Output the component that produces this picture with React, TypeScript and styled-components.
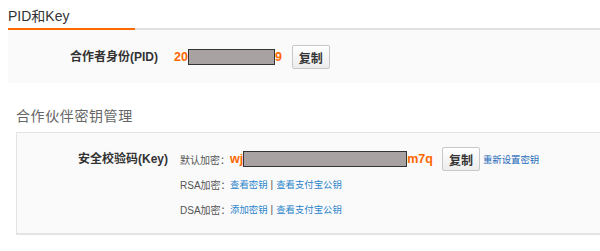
import React from "react";
import styled, { createGlobalStyle } from "styled-components";

const GlobalStyle = createGlobalStyle`
  body {
    margin: 0;
    background: #fff;
    overflow: hidden;
    font-family: "Liberation Sans", "Noto Sans CJK SC", sans-serif;
    color: #333;
  }
`;

const Page = styled.div`
  width: 592px;
  padding-left: 8px;
`;

const TabBar = styled.div`
  display: flex;
  height: 28px;
  border-bottom: 2px solid #e0e0e0;
`;

const Tab = styled.div`
  width: 127px;
  padding-top: 5px;
  font-size: 14px;
  color: #333;
  border-bottom: 2px solid #ff6a00;
  margin-bottom: -2px;
`;

const Panel = styled.div<{ $bordered?: boolean }>`
  background: #fafafa;
  margin-left: ${(p) => (p.$bordered ? "8px" : "0")};
  border: ${(p) => (p.$bordered ? "1px solid #e3e3e3" : "none")};
  border-right: none;
  border-bottom-width: ${(p) => (p.$bordered ? "2px" : "0")};
  padding: ${(p) => (p.$bordered ? "14px 0 12px" : "15px 0 14px")};
`;

const SectionTitle = styled.div`
  margin: 22px 0 0 8px;
  height: 27px;
  font-size: 14px;
  color: #666;
  letter-spacing: 0.6px;
`;

const Row = styled.div<{ $gap: number }>`
  display: flex;
  align-items: flex-start;
  gap: ${(p) => p.$gap}px;
`;

const Label = styled.div<{ $width: number }>`
  width: ${(p) => p.$width}px;
  flex-shrink: 0;
  text-align: right;
  font-size: 12px;
  font-weight: bold;
  color: #333;
  line-height: 24px;
`;

const Lines = styled.div`
  display: flex;
  flex-direction: column;
  gap: 1px;
`;

const Line = styled.div`
  display: flex;
  align-items: center;
  height: 24px;
`;

const Prefix = styled.span`
  flex-shrink: 0;
  width: 50px;
  white-space: nowrap;
  font-size: 10px;
  color: #555;
`;

const Secret = styled.span`
  display: inline-flex;
  align-items: center;
  font-size: 12.5px;
  font-weight: bold;
  color: #ff6600;
`;

const Mask = styled.span<{ $width: number }>`
  display: inline-block;
  width: ${(p) => p.$width}px;
  height: 14px;
  background: #a8a2a2;
  border: 1px solid #333;
`;

const CopyButton = styled.button<{ $gap: number }>`
  margin-left: ${(p) => p.$gap}px;
  width: 38px;
  height: 24px;
  padding: 0;
  border: 1px solid #c8c8c8;
  border-radius: 2px;
  background: linear-gradient(#ffffff, #ececec);
  font-family: "Noto Sans CJK SC", sans-serif;
  font-size: 12px;
  font-weight: bold;
  color: #333;
`;

const Link = styled.a<{ $strong?: boolean }>`
  font-size: 9.4px;
  color: ${(p) => (p.$strong ? "#1d69b8" : "#2a84cc")};
  text-decoration: none;
  white-space: nowrap;
`;

const Sep = styled.span`
  margin: 0 3px;
  font-size: 10px;
  color: #555;
`;

export default function App() {
  return (
    <Page>
      <GlobalStyle />
      <TabBar>
        <Tab>PID和Key</Tab>
      </TabBar>
      <Panel>
        <Row $gap={16}>
          <Label $width={150}>合作者身份(PID)</Label>
          <Line>
            <Secret>
              20
              <Mask $width={85} />
              9
            </Secret>
            <CopyButton $gap={10}>复制</CopyButton>
          </Line>
        </Row>
      </Panel>
      <SectionTitle>合作伙伴密钥管理</SectionTitle>
      <Panel $bordered>
        <Row $gap={12}>
          <Label $width={151}>安全校验码(Key)</Label>
          <Lines>
            <Line>
              <Prefix>默认加密：</Prefix>
              <Secret>
                wj
                <Mask $width={162} />
                m7q
              </Secret>
              <CopyButton $gap={9}>复制</CopyButton>
              <Link href="#" $strong style={{ marginLeft: 3 }}>
                重新设置密钥
              </Link>
            </Line>
            <Line>
              <Prefix>RSA加密：</Prefix>
              <Link href="#">查看密钥</Link>
              <Sep>|</Sep>
              <Link href="#">查看支付宝公钥</Link>
            </Line>
            <Line>
              <Prefix>DSA加密：</Prefix>
              <Link href="#">添加密钥</Link>
              <Sep>|</Sep>
              <Link href="#">查看支付宝公钥</Link>
            </Line>
          </Lines>
        </Row>
      </Panel>
    </Page>
  );
}
